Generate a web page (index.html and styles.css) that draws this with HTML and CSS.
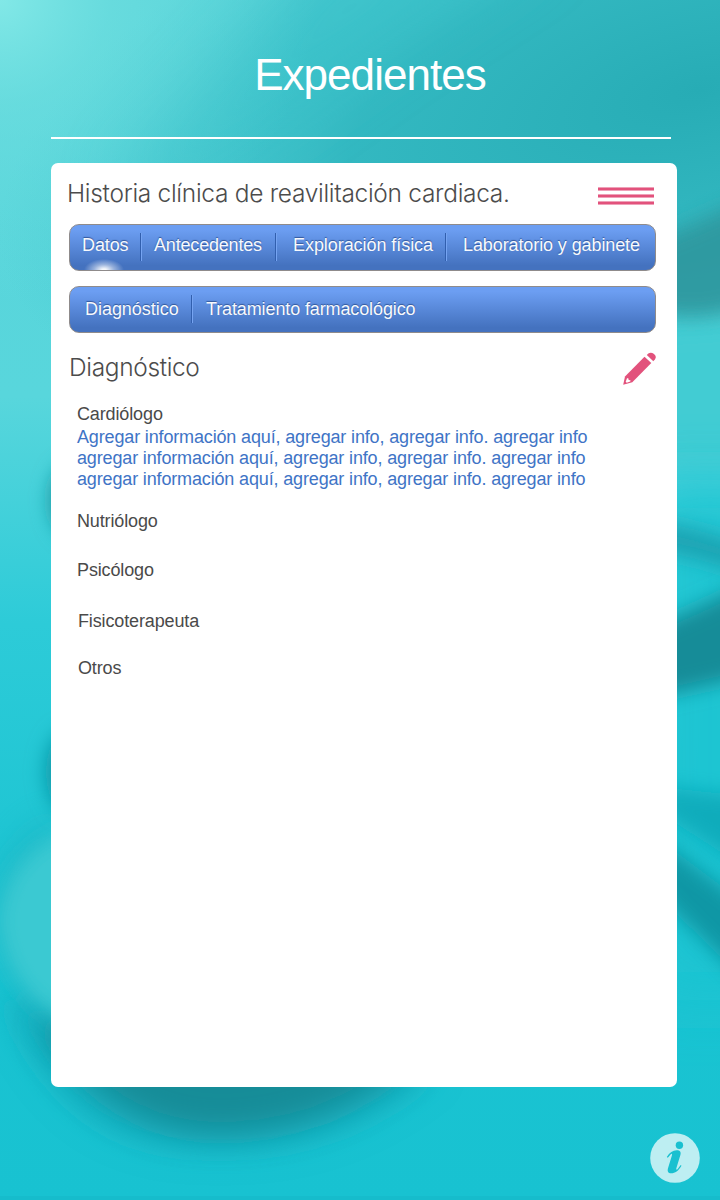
FILE: index.html
```html
<!DOCTYPE html>
<html lang="es">
<head>
<meta charset="utf-8">
<title>Expedientes</title>
<link rel="stylesheet" href="styles.css">
</head>
<body>
<div class="screen">
  <svg class="backdrop" viewBox="0 0 720 1200" aria-hidden="true">
    <defs>
      <linearGradient id="base" x1="0" y1="0" x2="0" y2="1">
        <stop offset="0" stop-color="#5ad4d9"/><stop offset=".33" stop-color="#58d6dc"/>
        <stop offset=".52" stop-color="#2dcbd8"/><stop offset=".75" stop-color="#1bc4d2"/>
        <stop offset="1" stop-color="#18c2d1"/>
      </linearGradient>
      <radialGradient id="shade" gradientUnits="userSpaceOnUse" cx="0" cy="0" r="1" gradientTransform="translate(700 90) rotate(-14) scale(720 300)">
        <stop offset="0" stop-color="#27acb5"/><stop offset=".5" stop-color="#2fb5be" stop-opacity=".9"/><stop offset="1" stop-color="#3bc1c9" stop-opacity="0"/>
      </radialGradient>
      <radialGradient id="light" gradientUnits="userSpaceOnUse" cx="0" cy="0" r="1" gradientTransform="rotate(-20) scale(320 300)">
        <stop offset="0" stop-color="#82e8e7"/><stop offset=".35" stop-color="#74e2e2" stop-opacity=".5"/><stop offset="1" stop-color="#6adfe1" stop-opacity="0"/>
      </radialGradient>
      <filter id="b8" x="-60%" y="-60%" width="220%" height="220%"><feGaussianBlur stdDeviation="10"/></filter>
      <filter id="b14" x="-60%" y="-60%" width="220%" height="220%"><feGaussianBlur stdDeviation="16"/></filter>
      <filter id="b25" x="-60%" y="-60%" width="220%" height="220%"><feGaussianBlur stdDeviation="30"/></filter>
    </defs>
    <rect width="720" height="1200" fill="url(#base)"/>
    <rect width="720" height="500" fill="url(#shade)"/>
    <path d="M330-60H560L390 50 180 200 110 180Z" fill="#35bfc8" opacity=".5" filter="url(#b25)"/>
    <rect width="400" height="400" fill="url(#light)"/>
    <path d="M640 320 760 312V470L640 470Z" fill="#43ccd3" filter="url(#b14)"/>
    <path d="M640 480H780V1000H640Z" fill="#1dc4d2" opacity=".85" filter="url(#b25)"/>
    <path d="M640 243C680 232 700 218 760 195V302Q690 330 640 306Z" fill="#2e979e" opacity=".9" filter="url(#b8)"/>
    <path d="M640 520Q700 526 760 552V580Q700 556 640 548Z" fill="#1a9fae" opacity=".9" filter="url(#b8)"/>
    <path d="M640 632Q690 612 780 568V668Q700 688 640 700Z" fill="#158c98" filter="url(#b8)"/>
    <path d="M640 785 780 800V890L640 800Z" fill="#0fa8b8" opacity=".85" filter="url(#b8)"/>
    <path d="M640 825 780 930V1015L640 878Z" fill="#108f9d" opacity=".85" filter="url(#b8)"/>
    <ellipse cx="75" cy="500" rx="24" ry="38" fill="#168e98" filter="url(#b8)"/>
    <ellipse cx="70" cy="772" rx="24" ry="42" fill="#0e95a5" filter="url(#b8)"/>
    <path d="M5 1000Q65 1155 215 1150Q340 1155 440 1070L180 1000 45 1000Z" fill="#14a9ba" opacity=".75" filter="url(#b14)"/>
    <path d="M45 1030Q115 1135 225 1133Q330 1130 410 1062L250 950 90 1000Z" fill="#158c98" filter="url(#b14)"/>
    <path d="M-10 920Q0 830 60 815L100 1065Q10 1010-10 920Z" fill="#159fb0" opacity=".3" filter="url(#b14)"/>
    <path d="M-2 920Q5 855 70 830L105 1040Q5 1005-2 920Z" fill="#3bc9d2" filter="url(#b8)"/>
    <rect y="1196" width="720" height="12" fill="#14b5c6" opacity=".4"/>
  </svg>

  <header class="header"><h1 class="title">Expedientes</h1></header>

  <main class="card">
    <div class="card-head">
      <h2 class="heading heading-main">Historia clínica de reavilitación cardiaca.</h2>
      <div class="menu"><span class="menu-bar"></span><span class="menu-bar"></span><span class="menu-bar"></span></div>
    </div>
    <nav class="tabs tabs-main">
      <a class="tab tab-datos">Datos</a>
      <a class="tab tab-ante">Antecedentes</a>
      <a class="tab tab-expl">Exploración física</a>
      <a class="tab tab-lab">Laboratorio y gabinete</a>
    </nav>
    <nav class="tabs tabs-sub">
      <a class="tab tab-diag">Diagnóstico</a>
      <a class="tab tab-trat">Tratamiento farmacológico</a>
    </nav>
    <div class="section-head">
      <h2 class="heading heading-section">Diagnóstico</h2>
      <svg class="pencil" viewBox="0 0 33 33">
        <path d="M.2 32.800 2 24.500 21.500 4.800 28.300 11 9.300 30.300Z" fill="#e2527c"/>
        <path d="M23.800 3 25.300 1.500Q28-.3 31 2T32 7.300L30.300 9.200Z" fill="#e2527c"/>
        <path d="M2.700 29.700 4 26.300 5.300 26.300 5.700 28 7.500 28.300 7.300 29.500 3.700 30.700Z" fill="#fff"/>
      </svg>
    </div>
    <section class="entries">
      <div class="entry entry-card">
        <h3 class="role">Cardiólogo</h3>
        <p class="note">Agregar información aquí, agregar info, agregar info. agregar info<br>agregar información aquí, agregar info, agregar info. agregar info<br>agregar información aquí, agregar info, agregar info. agregar info</p>
      </div>
      <h3 class="role role-nutri">Nutriólogo</h3>
      <h3 class="role role-psico">Psicólogo</h3>
      <h3 class="role role-fisio">Fisicoterapeuta</h3>
      <h3 class="role role-otros">Otros</h3>
    </section>
  </main>

  <footer class="footer">
    <svg class="info" viewBox="0 0 50 50">
      <circle cx="25" cy="25" r="24.800" fill="#bdeef2"/>
      <circle cx="29.400" cy="12.200" r="3.700" fill="#19c0d0"/>
      <path d="M16.800 24C19.500 19.500 23 17.300 26.500 17.300C30.300 17.300 31.200 19.300 30.400 22L26.400 35C25.900 36.700 26.700 37.200 27.700 36L30.700 32 31.500 32.800C28.500 38 25 40.300 21.300 40.300C17.800 40.300 17.200 38 18 35.200L21.900 22.500C22.400 20.800 21.800 20.300 20.800 21.300L17.800 24.700Z" fill="#19c0d0"/>
    </svg>
  </footer>
</div>
</body>
</html>
```

FILE: styles.css
```css
* { box-sizing: border-box; }
body { margin: 0; font-family: "Liberation Sans", Arial, sans-serif; }
h1, h2, h3, p { margin: 0; font-weight: 400; }

.screen {
  position: relative;
  width: 720px;
  height: 1200px;
  overflow: hidden;
  display: flex;
  flex-direction: column;
}
.backdrop { position: absolute; inset: 0; z-index: -1; width: 720px; height: 1200px; }

.header {
  height: 139px;
  margin: 0 49px 0 51px;
  padding-top: 50px;
  padding-left: 18px;
  text-align: center;
  border-bottom: 2px solid #fff;
}
.title { color: #fff; font-size: 44px; line-height: 50px; letter-spacing: -0.95px; }

.card {
  width: 626px;
  height: 924px;
  margin: 24px 0 0 51px;
  padding: 14px 21px 0 18px;
  background: #fff;
  border-radius: 7px;
}
.card-head { display: flex; justify-content: space-between; height: 47px; }
.heading { color: #4c4c4c; font-family: Inter, "Liberation Sans", sans-serif; font-weight: 300; font-size: 24.5px; line-height: 32px; white-space: nowrap; }
.heading-main { margin-left: -2px; letter-spacing: -0.3px; }
.menu { display: flex; flex-direction: column; gap: 3px; width: 56px; margin: 10px 2px 0 0; }
.menu-bar { height: 4px; background: linear-gradient(#efa0b8 0 1px, #e2527c 1px 3px, #efa0b8 3px); }

.tabs {
  display: flex;
  height: 47px;
  padding-top: 8px;
  border: 1px solid #8f8b8b;
  border-radius: 10px;
  color: #f7f9fd;
  font-size: 18px;
  line-height: 24px;
  letter-spacing: -0.1px;
  white-space: nowrap;
  text-shadow: 0 -1px 1px rgba(25, 55, 115, .65);
}
.tabs-main {
  background: radial-gradient(ellipse 20px 11px at 34px 100%, rgba(255,255,255,.95) 10%, rgba(255,255,255,.45) 50%, transparent), linear-gradient(#6c9ef2 10%, #4472bf 90%);
}
.tabs-sub { margin-top: 15px; line-height: 28px; letter-spacing: -0.12px; background: linear-gradient(#6c9ef2 10%, #4472bf 90%); }
.tab { height: 28px; }
.tab + .tab { border-left: 1px solid #315fae; box-shadow: inset 1px 0 #76a4f2; }
.tab-datos { width: 70px; padding-left: 12px; }
.tab-ante { width: 135px; padding-left: 13px; letter-spacing: -0.18px; }
.tab-expl { width: 170px; padding-left: 17px; letter-spacing: -0.06px; }
.tab-lab { padding-left: 17px; }
.tab-diag { width: 121px; padding-left: 15px; letter-spacing: -0.04px; }
.tab-trat { padding-left: 14px; }

.section-head { display: flex; justify-content: space-between; height: 66px; padding-top: 18px; }
.heading-section { letter-spacing: -0.35px; }
.pencil { width: 33px; height: 33px; margin: 1px 0.5px 0 0; }

.entries { padding-left: 8px; font-size: 18px; line-height: 21px; }
.role { color: #4a4a4a; font-size: 18px; line-height: 21px; letter-spacing: -0.13px; }
.entry-card { padding-top: 5px; }
.note { margin-top: 2px; color: #4074c6; white-space: nowrap; letter-spacing: -0.15px; }
.role-nutri { margin-top: 21px; }
.role-psico { margin-top: 28px; }
.role-fisio { margin: 30px 0 0 1px; }
.role-otros { margin: 26px 0 0 1px; }

.footer { display: flex; justify-content: flex-end; padding: 46px 20px 0 0; }
.info { width: 50px; height: 50px; }
```
